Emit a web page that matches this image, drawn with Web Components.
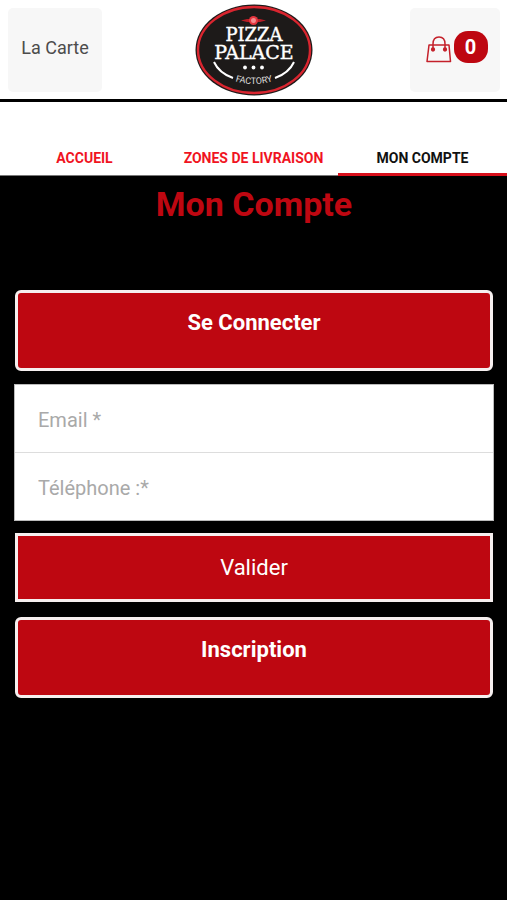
<!DOCTYPE html>
<html lang="fr">
<head>
<meta charset="utf-8">
<meta name="viewport" content="width=device-width, initial-scale=1">
<title>Pizza Palace – Mon Compte</title>
<style>
  html { background: #000; }
  body {
    margin: 0;
    --brand: #be0711;
    --accent: #f0141f;
    font-family: Roboto, "Liberation Sans", sans-serif;
    background: #000;
  }
</style>
</head>
<body>
<pp-page></pp-page>

<script>
const define = (name, html, setup) => {
  customElements.define(name, class extends HTMLElement {
    connectedCallback() {
      if (this.shadowRoot) return;
      this.attachShadow({ mode: "open" }).innerHTML = html;
      if (setup) setup(this, this.shadowRoot);
    }
  });
};

define("pp-logo", `
  <style>
    :host { display: block; }
    svg { display: block; width: 118px; height: 92px; }
  </style>
  <svg viewBox="0 0 118 92" role="img" aria-label="Pizza Palace Factory">
    <ellipse cx="59" cy="46" rx="58.5" ry="45.5" fill="#1d1a19"/>
    <ellipse cx="59" cy="46" rx="56" ry="43" fill="none" stroke="#d9252f" stroke-width="2.4"/>
    <path d="M46 16.500 L52 15 H65 L71 16.500 L65 18 H52 Z" fill="#b51d25"/>
    <circle cx="58.500" cy="16.500" r="4.500" fill="#e5343d"/>
    <circle cx="58.500" cy="16.500" r="2.500" fill="#f28b8e"/>
    <text font-family="'DejaVu Serif', serif" fill="#fff" stroke="#fff" stroke-width=".4" text-anchor="middle"><tspan x="59" y="37" font-size="18">PIZZA</tspan><tspan x="59" y="55" font-size="19">PALACE</tspan></text>
    <g fill="#fff">
      <circle cx="50" cy="63.500" r="1.900"/>
      <circle cx="58.500" cy="63.500" r="1.900"/>
      <circle cx="67" cy="63.500" r="1.900"/>
    </g>
    <path d="M19 58 Q24 69 38 74" fill="none" stroke="#fff" stroke-width="2"/>
    <path d="M99 58 Q94 69 80 74" fill="none" stroke="#fff" stroke-width="2"/>
    <path id="arc" d="M34 75 Q59 85 84 75" fill="none"/>
    <text font-family="Roboto, sans-serif" font-size="9" fill="#ddd" text-anchor="middle"><textPath href="#arc" startOffset="50%">FACTORY</textPath></text>
  </svg>`);

define("pp-header", `
  <style>
    :host {
      display: grid; grid-template-columns: 1fr auto 1fr; align-items: center;
      box-sizing: border-box; padding: 4px 7px 3px 8px;
      background: #fff; border-bottom: 3px solid #000;
    }
    button {
      display: flex; align-items: center; justify-content: center;
      height: 84px; border: 0; border-radius: 5px; background: #f7f7f7;
      font: 18px/24px Roboto, sans-serif; color: #4c4c4c;
    }
    .menu { justify-self: start; width: 94px; padding: 0 0 4px; }
    .cart { justify-self: end; width: 90px; padding: 0 0 6px 3px; gap: 2px; }
    svg { display: block; width: 26px; height: 28px; margin-top: 4px; }
    .count {
      display: grid; place-items: center; width: 34px; height: 32px; border-radius: 14px;
      background: var(--brand); color: #fff; font-size: 20px; font-weight: 700;
    }
  </style>
  <button class="menu" type="button">La Carte</button>
  <pp-logo></pp-logo>
  <button class="cart" type="button" aria-label="Panier, 0 article">
    <svg viewBox="0 0 26 28" fill="none" stroke="#c4202a" stroke-width="1.500" stroke-linejoin="round">
      <path d="M3 10 H23 L24.500 26.500 H1 Z"/>
      <path d="M7 14 V9 Q7 2 13 2 Q19 2 19 9 V14"/>
      <circle cx="7" cy="14.500" r="1.400" fill="#c4202a"/>
      <circle cx="19" cy="14.500" r="1.400" fill="#c4202a"/>
    </svg>
    <span class="count">0</span>
  </button>`);

define("pp-tabs", `
  <style>
    :host { display: block; background: #fff; }
    nav { display: grid; grid-template-columns: repeat(3, 1fr); padding-top: 32px; }
  </style>
  <nav><slot></slot></nav>`);

define("pp-tab", `
  <style>
    :host { display: block; }
    a {
      display: block; padding: 12px 0 5px; border-bottom: 1px solid #777;
      font-size: 14px; line-height: 24px; font-weight: 700; text-align: center;
      text-decoration: none; white-space: nowrap; color: var(--accent);
    }
    :host([active]) a { color: #111; padding-bottom: 3px; border-bottom: 3px solid #d80f1b; }
  </style>
  <a href="#"><slot></slot></a>`, (host, root) => {
    if (host.hasAttribute("active")) root.querySelector("a").setAttribute("aria-current", "page");
});

define("pp-button", `
  <style>
    :host { display: block; margin: 0 1px; }
    button {
      display: block; width: 100%; border: 3px solid #f6efef;
      background: var(--brand); color: #fff;
      font: 700 22px/28px Roboto, sans-serif; text-align: center;
      padding: 16px 12px 31px; border-radius: 6px;
    }
    :host([plain]) button { font-weight: 400; padding: 18px 12px 17px; border-radius: 0; }
  </style>
  <button><slot></slot></button>`, (host, root) => {
    root.querySelector("button").type = host.getAttribute("type") || "button";
});

define("pp-field", `
  <style>
    :host { display: block; }
    input {
      display: block; box-sizing: border-box; width: 100%; height: 67px; margin: 0;
      padding: 2px 23px 0; border: 0; border-radius: 0; outline: 0; background: #fff;
      font: 20px/24px Roboto, sans-serif; color: #333;
    }
    input::placeholder { color: #a9a9a9; opacity: 1; }
  </style>
  <input>`, (host, root) => {
    const input = root.querySelector("input");
    const label = host.getAttribute("label");
    input.type = host.getAttribute("type");
    input.placeholder = label;
    input.setAttribute("aria-label", label);
});

define("pp-field-group", `
  <style>
    :host { display: grid; gap: 1px; background: #ddd; border: 1px solid #bbb; box-sizing: border-box; }
  </style>
  <slot></slot>`);

define("pp-account", `
  <style>
    :host { display: block; padding: 5px 13px 32px 14px; }
    h1 { margin: 0 0 63px; font-size: 34px; line-height: 46px; font-weight: 700; text-align: center; color: var(--brand); }
    form { display: grid; gap: 12px; margin: 13px 0 15px; }
  </style>
  <h1>Mon Compte</h1>
  <pp-button>Se Connecter</pp-button>
  <form>
    <pp-field-group>
      <pp-field type="email" label="Email *"></pp-field>
      <pp-field type="tel" label="Téléphone :*"></pp-field>
    </pp-field-group>
    <pp-button plain type="submit">Valider</pp-button>
  </form>
  <pp-button>Inscription</pp-button>`);

define("pp-page", `
  <style>:host { display: block; min-height: 100vh; background: #000; }</style>
  <pp-header></pp-header>
  <pp-tabs>
    <pp-tab>ACCUEIL</pp-tab>
    <pp-tab>ZONES DE LIVRAISON</pp-tab>
    <pp-tab active>MON COMPTE</pp-tab>
  </pp-tabs>
  <main><pp-account></pp-account></main>`);
</script>
</body>
</html>
